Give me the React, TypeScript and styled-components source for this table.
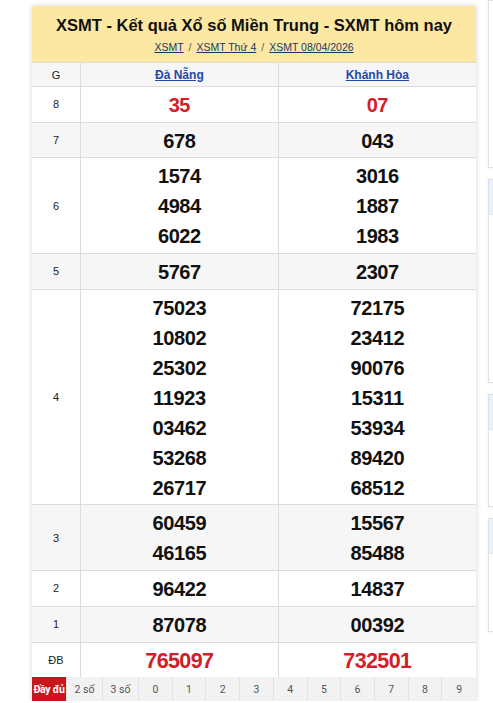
import React from 'react';
import styled, { createGlobalStyle } from 'styled-components';

const GlobalStyle = createGlobalStyle`
  html, body {
    margin: 0;
    padding: 0;
    background: #fff;
    overflow: hidden;
  }
  body {
    font-family: "Liberation Sans", Arial, sans-serif;
    color: #111;
  }
`;

const Page = styled.div`
  display: flex;
  align-items: flex-start;
  gap: 12px;
  padding: 6px 0 0 32px;
  width: 800px;
`;

const Card = styled.div`
  width: 444px;
  flex-shrink: 0;
  background: #fff;
  box-shadow: 0 0 5px rgba(0, 0, 0, 0.18);
`;

const Heading = styled.div`
  background: #fce8a3;
  text-align: center;
  padding: 9px 0 7px;
  height: 40px;
`;

const Title = styled.h1`
  margin: 0;
  font-size: 16.5px;
  font-weight: 700;
  line-height: 20px;
  color: #111;
`;

const Crumbs = styled.div`
  margin-top: 6px;
  font-size: 10.5px;
  line-height: 13px;
  color: #555;
  a {
    color: #1d3566;
    text-decoration: underline;
  }
  span {
    margin: 0 5px;
  }
`;

const Table = styled.table`
  width: 100%;
  border-collapse: collapse;
  table-layout: fixed;
`;

const Row = styled.tr<{ $shade: boolean }>`
  background: ${({ $shade }) => ($shade ? '#f6f6f6' : '#fff')};
  td, th {
    border-top: 1px solid #dcdcdc;
    border-right: 1px solid #dcdcdc;
  }
  td:last-child, th:last-child {
    border-right: none;
  }
`;

const HeadCell = styled.th`
  height: 23px;
  padding: 0;
  font-size: 12px;
  font-weight: 700;
  a {
    color: #1f4aa6;
    text-decoration: underline;
  }
`;

const PrizeName = styled.td`
  width: 48px;
  text-align: center;
  font-size: 11px;
  color: #222;
  padding: 0;
`;

const NumCell = styled.td`
  text-align: center;
  padding: 3px 0 1.7px;
`;

const Num = styled.div<{ $red?: boolean; $big?: boolean }>`
  font-size: ${({ $big }) => ($big ? '21.5px' : '20px')};
  letter-spacing: ${({ $big }) => ($big ? '-0.6px' : '-0.4px')};
  line-height: 30px;
  font-weight: 700;
  color: ${({ $red }) => ($red ? '#d0202a' : '#111')};
`;

const Filter = styled.div`
  display: grid;
  grid-template-columns: 35px 36px 36px repeat(10, 1fr);
  font-family: Roboto, "Liberation Sans", sans-serif;
  font-size: 10.5px;
  color: #555;
  background: #f2f2f2;
`;

const FilterItem = styled.div<{ $active?: boolean }>`
  height: 24px;
  display: flex;
  align-items: center;
  justify-content: center;
  border-right: 1px solid #e2e2e2;
  background: ${({ $active }) => ($active ? '#c8161d' : 'transparent')};
  color: ${({ $active }) => ($active ? '#fff' : '#555')};
  font-weight: ${({ $active }) => ($active ? 700 : 400)};
  letter-spacing: ${({ $active }) => ($active ? '-0.3px' : '0')};
  &:last-child {
    border-right: none;
  }
`;

const Sidebar = styled.div`
  display: flex;
  flex-direction: column;
  gap: 11px;
  margin-top: -6px;
  width: 300px;
`;

const SideBox = styled.div<{ $h: number }>`
  height: ${({ $h }) => $h}px;
  border: 1px solid #e0e0e0;
  background: #fff;
  box-shadow: 0 0 3px rgba(0, 0, 0, 0.08);
`;

const SideHead = styled.div`
  height: 34px;
  background: #e9f1fc;
  border-bottom: 1px solid #e0e8f4;
`;

type Prize = { name: string; a: string[]; b: string[]; red?: boolean; big?: boolean };

const prizes: Prize[] = [
  { name: '8', a: ['35'], b: ['07'], red: true },
  { name: '7', a: ['678'], b: ['043'] },
  { name: '6', a: ['1574', '4984', '6022'], b: ['3016', '1887', '1983'] },
  { name: '5', a: ['5767'], b: ['2307'] },
  {
    name: '4',
    a: ['75023', '10802', '25302', '11923', '03462', '53268', '26717'],
    b: ['72175', '23412', '90076', '15311', '53934', '89420', '68512'],
  },
  { name: '3', a: ['60459', '46165'], b: ['15567', '85488'] },
  { name: '2', a: ['96422'], b: ['14837'] },
  { name: '1', a: ['87078'], b: ['00392'] },
  { name: 'ĐB', a: ['765097'], b: ['732501'], red: true, big: true },
];

const filters = ['Đầy đủ', '2 số', '3 số', '0', '1', '2', '3', '4', '5', '6', '7', '8', '9'];

export default function App() {
  return (
    <>
      <GlobalStyle />
      <Page>
        <Card>
          <Heading>
            <Title>XSMT - Kết quả Xổ số Miền Trung - SXMT hôm nay</Title>
            <Crumbs>
              <a href="#">XSMT</a>
              <span>/</span>
              <a href="#">XSMT Thứ 4</a>
              <span>/</span>
              <a href="#">XSMT 08/04/2026</a>
            </Crumbs>
          </Heading>
          <Table>
            <tbody>
              <Row $shade>
                <PrizeName as="th" style={{ fontWeight: 400 }}>G</PrizeName>
                <HeadCell><a href="#">Đà Nẵng</a></HeadCell>
                <HeadCell><a href="#">Khánh Hòa</a></HeadCell>
              </Row>
              {prizes.map((p, i) => (
                <Row key={p.name} $shade={i % 2 === 1}>
                  <PrizeName>{p.name}</PrizeName>
                  <NumCell>
                    {p.a.map((n) => (
                      <Num key={n} $red={p.red} $big={p.big}>{n}</Num>
                    ))}
                  </NumCell>
                  <NumCell>
                    {p.b.map((n) => (
                      <Num key={n} $red={p.red} $big={p.big}>{n}</Num>
                    ))}
                  </NumCell>
                </Row>
              ))}
            </tbody>
          </Table>
          <Filter>
            {filters.map((f, i) => (
              <FilterItem key={f} $active={i === 0}>{f}</FilterItem>
            ))}
          </Filter>
        </Card>
        <Sidebar>
          <SideBox $h={166} />
          <SideBox $h={202}><SideHead /></SideBox>
          <SideBox $h={111}><SideHead /></SideBox>
          <SideBox $h={112}><SideHead /></SideBox>
        </Sidebar>
      </Page>
    </>
  );
}
